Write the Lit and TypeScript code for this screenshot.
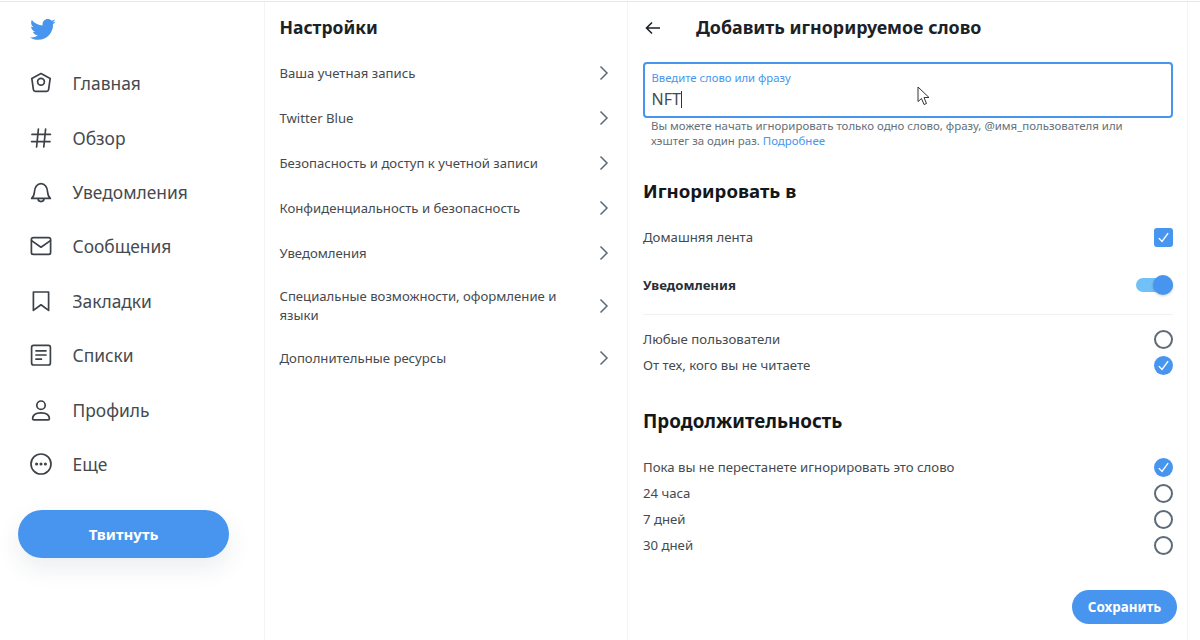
import { html, css, LitElement, svg } from 'lit';
import { customElement } from 'lit/decorators.js';

const navIcons = {
  home: svg`<path d="M12 2.6 21.2 7.4 19.6 18.6a2 2 0 0 1-2 1.7H6.4a2 2 0 0 1-2-1.7L2.8 7.4z"/><circle cx="12" cy="10.8" r="3.4"/>`,
  hash: svg`<path d="M9.4 3 7.6 21M16.6 3 14.8 21M3 8.4H21.4M2.6 15.6H21"/>`,
  bell: svg`<path d="M2.6 18.4c1.8-1.4 2.6-3.4 2.8-6.4.2-4.6 2.8-8.4 6.6-8.4s6.4 3.8 6.6 8.4c.2 3 1 5 2.8 6.4zM9 18.6c0 2 1.3 3 3 3s3-1 3-3"/>`,
  mail: svg`<rect x="2.4" y="3.6" width="19.2" height="16.8" rx="2"/><path d="M2.6 6.6 12 13.2l9.4-6.6"/>`,
  mark: svg`<path d="M4.4 3H19.6V21.4L12 15.8 4.4 21.4z"/>`,
  list: svg`<rect x="2.6" y="2.4" width="18.8" height="19.6" rx="2"/><path d="M7 7.8H17M7 12H17M7 16.2H12.4"/>`,
  user: svg`<circle cx="12" cy="7.2" r="4.2"/><path d="M3.6 20.800c0-4.200 3.600-6 8.400-6s8.400 1.800 8.400 6c0 .6-.6 1-1.200 1H4.800c-.6 0-1.200-.4-1.200-1z"/>`,
  more: svg`<circle cx="12" cy="12" r="10"/><circle cx="7.6" cy="12" r=".7"/><circle cx="12" cy="12" r=".7"/><circle cx="16.4" cy="12" r=".7"/>`,
};

const navItems: [keyof typeof navIcons, string][] = [
  ['home', 'Главная'],
  ['hash', 'Обзор'],
  ['bell', 'Уведомления'],
  ['mail', 'Сообщения'],
  ['mark', 'Закладки'],
  ['list', 'Списки'],
  ['user', 'Профиль'],
  ['more', 'Еще'],
];

const settings = [
  'Ваша учетная запись',
  'Twitter Blue',
  'Безопасность и доступ к учетной записи',
  'Конфиденциальность и безопасность',
  'Уведомления',
  'Специальные возможности, оформление и языки',
  'Дополнительные ресурсы',
];

const check = html`<svg viewBox="0 0 18 18" width="19" height="19"><path d="M4.6 9.6 7.6 12.8 13.4 4.8" fill="none" stroke="#fff" stroke-width="1.3"/></svg>`;

@customElement('app-root')
export class AppRoot extends LitElement {
  static styles = css`
    :host {
      display: block;
      width: 1200px;
      height: 640px;
      overflow: hidden;
      background: #fff;
      font-family: "Noto Sans", "Open Sans", sans-serif;
      color: #14171a;
    }
    .page {
      position: relative;
      display: flex;
      height: 639px;
      margin-top: 1px;
      border-top: 1px solid #e6e6e6;
      box-sizing: border-box;
      width: 1200px;
    }
    .side {
      width: 265px;
      flex: none;
      box-sizing: border-box;
      border-right: 1px solid #f3f4f5;
      padding: 14px 0 0 18px;
    }
    .logo { display: block; margin: 0 0 13px 11px; }
    .nav-item {
      display: flex;
      align-items: center;
      height: 54.4px;
      padding-left: 11px;
      font-size: 17.4px;
      color: #454a4f;
    }
    .nav-item svg {
      width: 24px;
      height: 24px;
      margin-right: 19.5px;
      fill: none;
      stroke: #3d4249;
      stroke-width: 1.7;
      stroke-linejoin: round;
      stroke-linecap: round;
    }
    .tweet {
      width: 211px;
      height: 48px;
      margin-top: 19px;
      border-radius: 24px;
      background: #4795ee;
      color: #fff;
      font-weight: 700;
      font-size: 15px;
      display: flex;
      align-items: center;
      justify-content: center;
      box-shadow: 0 10px 24px rgba(30, 50, 80, 0.09);
    }
    .middle {
      width: 363px;
      flex: none;
      box-sizing: border-box;
      border-right: 1px solid #f3f4f5;
      padding: 13px 0 0 14.5px;
    }
    h1 {
      margin: 0;
      font-size: 17.5px;
      font-weight: 700;
      line-height: 25px;
      color: #1c2126;
    }
    .middle h1 { margin-bottom: 10.5px; }
    .row {
      display: flex;
      align-items: center;
      justify-content: space-between;
      min-height: 45px;
      padding-right: 17px;
      font-size: 13.15px;
      line-height: 19px;
      color: #454a4f;
    }
    .row span { width: 300px; }
    .row.tall { min-height: 60px; }
    .right {
      width: 560px;
      flex: none;
      box-sizing: border-box;
      border-right: 1px solid #f3f4f5;
      padding: 13px 14px 0 15px;
      position: relative;
    }
    .head { display: flex; align-items: center; }
    .head svg { margin: 0 35px 0 2px; flex: none; }
    .head h1 { font-size: 17.85px; }
    .field {
      box-sizing: border-box;
      margin-top: 22px;
      height: 56px;
      border: 2px solid #4795ee;
      border-radius: 4px;
      padding: 7px 6.5px;
    }
    .field label {
      display: block;
      font-size: 11.3px;
      line-height: 14px;
      color: #4795ee;
    }
    .field .value {
      font-size: 16px;
      line-height: 22px;
      margin-top: 3px;
      color: #454a4f;
    }
    .caret {
      display: inline-block;
      width: 1px;
      height: 17px;
      background: #333;
      vertical-align: -3px;
    }
    .cursor { position: absolute; left: 289px; top: 84px; }
    .hint {
      margin: 0 0 0 8px;
      font-size: 11.45px;
      line-height: 15px;
      color: #657079;
    }
    .hint a { color: #4795ee; }
    h2 {
      margin: 31px 0 0;
      font-size: 18.6px;
      line-height: 24px;
      font-weight: 700;
      color: #14171a;
    }
    .opt {
      display: flex;
      align-items: center;
      justify-content: space-between;
      height: 26px;
      font-size: 13.2px;
      color: #454a4f;
    }
    .opt svg { display: block; }
    .opt.first { margin-top: 21px; }
    .opt.bold { margin-top: 22px; font-weight: 700; color: #2a2f34; }
    .box, .dot {
      width: 19px;
      height: 19px;
      box-sizing: border-box;
      background: #4795ee;
    }
    .box { border-radius: 3px; }
    .dot { border-radius: 50%; }
    .ring {
      width: 19px;
      height: 19px;
      box-sizing: border-box;
      border-radius: 50%;
      border: 2px solid #5d6b78;
    }
    .switch {
      position: relative;
      width: 37px;
      height: 14px;
      border-radius: 7px;
      background: #71c0f8;
    }
    .switch i {
      position: absolute;
      right: 0;
      top: -3px;
      width: 20px;
      height: 20px;
      border-radius: 50%;
      background: #4795ee;
      box-shadow: 0 1px 3px rgba(0, 0, 0, 0.2);
    }
    hr {
      margin: 16px 0 11px;
      border: 0;
      border-top: 1px solid #eff1f2;
    }
    .duration { margin: 31px 0 21px; font-size: 18.8px; }
    .save {
      position: absolute;
      right: 10px;
      top: 588px;
      width: 105px;
      height: 34px;
      border-radius: 17px;
      background: #4795ee;
      color: #fff;
      font-weight: 700;
      font-size: 13.4px;
      display: flex;
      align-items: center;
      justify-content: center;
    }
  `;

  render() {
    return html`
      <div class="page">
        <div class="side">
          <svg class="logo" viewBox="0 0 24 24" width="27" height="27" fill="#4795ee">
            <path d="M23.643 4.937c-.835.37-1.732.62-2.675.733.962-.576 1.7-1.49 2.048-2.578-.9.534-1.897.922-2.958 1.13-.85-.904-2.06-1.47-3.4-1.47-2.572 0-4.658 2.086-4.658 4.66 0 .364.042.718.12 1.06-3.873-.195-7.304-2.05-9.602-4.868-.4.69-.63 1.49-.63 2.342 0 1.616.823 3.043 2.072 3.878-.764-.025-1.482-.234-2.11-.583v.06c0 2.257 1.605 4.14 3.737 4.568-.392.106-.803.162-1.227.162-.3 0-.593-.028-.877-.082.593 1.85 2.313 3.198 4.352 3.234-1.595 1.25-3.604 1.995-5.786 1.995-.376 0-.747-.022-1.112-.065 2.062 1.323 4.51 2.093 7.14 2.093 8.57 0 13.255-7.098 13.255-13.254 0-.2-.005-.402-.014-.602.91-.658 1.7-1.477 2.323-2.41z"/>
          </svg>
          ${navItems.map(([icon, label]) => html`
            <div class="nav-item"><svg viewBox="0 0 24 24">${navIcons[icon]}</svg>${label}</div>
          `)}
          <div class="tweet">Твитнуть</div>
        </div>
        <div class="middle">
          <h1>Настройки</h1>
          ${settings.map((s) => html`
            <div class="row ${s.length > 40 ? 'tall' : ''}">
              <span>${s}</span>
              <svg width="12" height="16" viewBox="0 0 12 16" fill="none" stroke="#5d6b78" stroke-width="1.5"><path d="M2.5 1.500 9 8l-6.500 6.500"/></svg>
            </div>
          `)}
        </div>
        <div class="right">
          <div class="head">
            <svg width="16" height="14" viewBox="0 0 16 14" fill="none" stroke="#1c2126" stroke-width="1.6"><path d="M15 7H2M7 1.500 1.500 7 7 12.500"/></svg>
            <h1>Добавить игнорируемое слово</h1>
          </div>
          <div class="field">
            <label>Введите слово или фразу</label>
            <div class="value">NFT<span class="caret"></span></div>
          </div>
          <svg class="cursor" width="14" height="20" viewBox="0 0 14 20"><path d="M1 1V15.500L4.500 12.500 7 18.500 9.500 17.500 7 11.500H12z" fill="#fff" stroke="#333" stroke-width="1"/></svg>
          <div class="hint">
            <div>Вы можете начать игнорировать только одно слово, фразу, @имя_пользователя или</div>
            <div>хэштег за один раз. <a>Подробнее</a></div>
          </div>
          <h2>Игнорировать в</h2>
          <div class="opt first"><span>Домашняя лента</span><div class="box">${check}</div></div>
          <div class="opt bold"><span>Уведомления</span><div class="switch"><i></i></div></div>
          <hr />
          <div class="opt"><span>Любые пользователи</span><div class="ring"></div></div>
          <div class="opt"><span>От тех, кого вы не читаете</span><div class="dot">${check}</div></div>
          <h2 class="duration">Продолжительность</h2>
          <div class="opt"><span>Пока вы не перестанете игнорировать это слово</span><div class="dot">${check}</div></div>
          <div class="opt"><span>24 часа</span><div class="ring"></div></div>
          <div class="opt"><span>7 дней</span><div class="ring"></div></div>
          <div class="opt"><span>30 дней</span><div class="ring"></div></div>
          <div class="save">Сохранить</div>
        </div>
      </div>
    `;
  }
}
